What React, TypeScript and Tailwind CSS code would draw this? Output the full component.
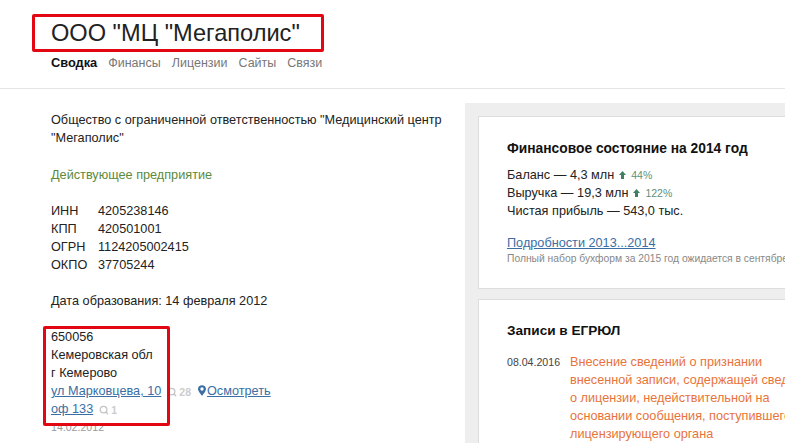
import { Search } from "lucide-react";

function Pin() {
	return (
		<svg width="8" height="11" viewBox="0 0 9 12" className="mr-[1px] inline-block align-[-1px]">
			<path
				fillRule="evenodd"
				fill="#3a6ea5"
				d="M4.5 0C2 0 0 1.9 0 4.3 0 7 4.5 12 4.5 12S9 7 9 4.3C9 1.9 7 0 4.5 0zm0 2.4a1.9 1.9 0 1 1 0 3.8 1.9 1.9 0 0 1 0-3.8z"
			/>
		</svg>
	);
}

function UpArrow() {
	return (
		<svg width="7" height="8" viewBox="0 0 7 8" className="mx-[5px] inline-block align-[0px]">
			<path fill="#3f7f63" d="M3.5 0L7 4H5v4H2V4H0z" />
		</svg>
	);
}

function Hits({ n }: { n: string }) {
	return (
		<span className="ml-[6px] inline-flex h-[14px] items-center gap-[2px] align-middle text-[10.5px] font-bold leading-[14px] text-[#cccccc]">
			<Search size={10} strokeWidth={3} color="#c4c4c4" />
			{n}
		</span>
	);
}

function Mark({ className }: { className: string }) {
	return <div className={"pointer-events-none absolute rounded-[2px] border-[3px] border-[#e30613] " + className} />;
}

const codes = [
	["ИНН", "4205238146"],
	["КПП", "420501001"],
	["ОГРН", "1124205002415"],
	["ОКПО", "37705244"],
];

const linkCls = "text-[#3a6ea5] underline";

export default function App() {
	return (
		<div className="relative h-[443px] w-[785px] overflow-hidden bg-white font-['Liberation_Sans',Arial,sans-serif] text-[12.7px] leading-[18px] text-[#222]">
			{/* header */}
			<header className="h-[89px] border-b border-[#e5e5e5] pl-[51px] pt-[17px]">
				<h1 className="text-[23.6px] leading-[32px] text-[#222]">ООО "МЦ "Мегаполис"</h1>
				<nav className="mt-[5px] flex gap-[11px] text-[12.5px] leading-[18px] text-[#777]">
					<span className="text-[12.8px] font-bold text-[#111]">Сводка</span>
					<span>Финансы</span>
					<span>Лицензии</span>
					<span>Сайты</span>
					<span>Связи</span>
				</nav>
			</header>

			<div className="flex">
				{/* left column */}
				<main className="w-[465px] shrink-0 pl-[51px] pr-[20px] pt-[22px]">
					<p>Общество с ограниченной ответственностью "Медицинский центр "Мегаполис"</p>
					<p className="mt-[19px] text-[#5c8a3c]">Действующее предприятие</p>
					<dl className="mt-[18px]">
						{codes.map(([k, v]) => (
							<div key={k} className="flex">
								<dt className="w-[47px]">{k}</dt>
								<dd>{v}</dd>
							</div>
						))}
					</dl>
					<p className="mt-[18px]">Дата образования: 14 февраля 2012</p>
					<div className="mt-[18px]">
						<div>650056</div>
						<div>Кемеровская обл</div>
						<div>г Кемерово</div>
						<div className="h-[18px]">
							<a className={linkCls}>ул Марковцева, 10</a>
							<Hits n="28" />
							<span className="ml-[7px]">
								<Pin />
								<a className={linkCls}>Осмотреть</a>
							</span>
						</div>
						<div className="h-[18px]">
							<a className={linkCls}>оф 133</a>
							<Hits n="1" />
						</div>
						<div className="text-[10.6px] text-[#999]">14.02.2012</div>
					</div>
				</main>

				{/* right column */}
				<aside className="mt-[14px] flex h-[400px] w-[400px] shrink-0 flex-col gap-[10px] bg-[#eeeeee] pl-[13px] pt-[13px]">
					<section className="h-[173px] shrink-0 border border-[#dddddd] bg-white pl-[28px] pt-[23px]">
						<h2 className="text-[13.8px] font-bold leading-[18px] text-[#111]">Финансовое состояние на 2014 год</h2>
						<div className="mt-[8px]">
							<div>
								Баланс — 4,3 млн
								<UpArrow />
								<span className="text-[10.5px] text-[#5f9079]">44%</span>
							</div>
							<div>
								Выручка — 19,3 млн
								<UpArrow />
								<span className="text-[10.5px] text-[#5f9079]">122%</span>
							</div>
							<div>Чистая прибыль — 543,0 тыс.</div>
						</div>
						<a className={"mt-[14px] block " + linkCls}>Подробности 2013...2014</a>
						<p className="whitespace-nowrap text-[10.3px] leading-[14px] text-[#888]">
							Полный набор бухформ за 2015 год ожидается в сентябре 2016
						</p>
					</section>
					<section className="flex-1 border border-[#dddddd] bg-white pl-[28px] pt-[22px]">
						<h2 className="text-[13.6px] font-bold leading-[18px] text-[#111]">Записи в ЕГРЮЛ</h2>
						<div className="mt-[13px] flex">
							<span className="w-[63px] shrink-0 text-[10.6px] text-[#444]">08.04.2016</span>
							<p className="w-[250px] shrink-0 text-[#e8733a]">
								Внесение сведений о признании внесенной записи, содержащей сведения о лицензии, недействительной на
								основании сообщения, поступившего от лицензирующего органа
							</p>
						</div>
					</section>
				</aside>
			</div>

			{/* red annotation frames drawn over the page */}
			<Mark className="left-[32px] top-[14px] h-[38px] w-[292px]" />
			<Mark className="left-[43px] top-[326px] h-[100px] w-[127px]" />
		</div>
	);
}
